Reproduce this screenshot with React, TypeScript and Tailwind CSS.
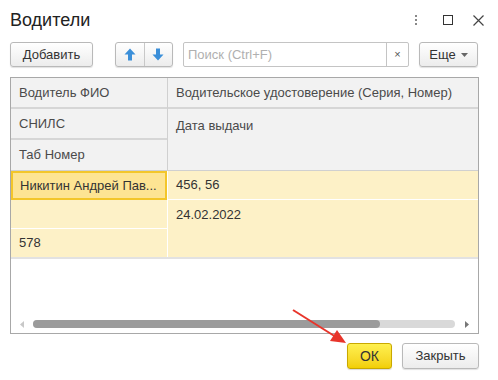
import React from "react";

const btn =
  "flex items-center justify-center rounded-[3px] border border-[#b9b9b9] bg-gradient-to-b from-white to-[#ececec] shadow-[0_1px_1px_rgba(0,0,0,0.12)] text-[13px] text-[#333]";

function ArrowUp() {
  return (
    <svg width="12" height="13" viewBox="0 0 12 13">
      <path d="M6 0.5 L11.5 6.5 L8 6.5 L8 12.5 L4 12.5 L4 6.5 L0.5 6.5 Z" fill="#3b8fd9" />
    </svg>
  );
}
function ArrowDown() {
  return (
    <svg width="12" height="13" viewBox="0 0 12 13">
      <path d="M6 12.5 L11.5 6.5 L8 6.5 L8 0.5 L4 0.5 L4 6.5 L0.5 6.5 Z" fill="#3b8fd9" />
    </svg>
  );
}

export default function App() {
  return (
    <div
      className="relative w-[498px] h-[380px] bg-white text-[#333] overflow-hidden"
      style={{ fontFamily: '"Liberation Sans", Arial, sans-serif' }}
    >
      {/* Title */}
      <div className="flex items-center h-[40px] pl-[10px] pr-[14px] pt-[0px]">
        <div className="text-[18px] text-[#222] leading-none">Водители</div>
        <div className="ml-auto flex items-center">
          <div className="flex flex-col gap-[2px] mr-[26px]">
            <div className="w-[2px] h-[2px] bg-[#888]" />
            <div className="w-[2px] h-[2px] bg-[#888]" />
            <div className="w-[2px] h-[2px] bg-[#888]" />
          </div>
          <div className="w-[10px] h-[10px] border border-[#333] mr-[20px]" />
          <svg width="11" height="11" viewBox="0 0 11 11">
            <path d="M0.5 0.5 L10.5 10.5 M10.5 0.5 L0.5 10.5" stroke="#444" strokeWidth="1.2" />
          </svg>
        </div>
      </div>

      {/* Toolbar */}
      <div className="flex items-center h-[25px] mt-[2px] pl-[10px]">
        <div className={`${btn} w-[83px] h-[25px]`}>Добавить</div>
        <div className="ml-[22px] flex h-[25px] w-[58px] rounded-[3px] border border-[#b9b9b9] bg-gradient-to-b from-white to-[#ececec] shadow-[0_1px_1px_rgba(0,0,0,0.12)]">
          <div className="flex-1 flex items-center justify-center border-r border-[#c8c8c8]">
            <ArrowUp />
          </div>
          <div className="flex-1 flex items-center justify-center">
            <ArrowDown />
          </div>
        </div>
        <div className="ml-[10px] flex h-[25px] w-[226px] border border-[#c4c4c4] rounded-[2px] bg-white">
          <div className="flex-1 flex items-center pl-[4px] text-[13px] text-[#b0b0b0]">Поиск (Ctrl+F)</div>
          <div className="w-[22px] flex items-center justify-center border-l border-[#c4c4c4] text-[11px] text-[#555]">×</div>
        </div>
        <div className={`${btn} ml-[10px] w-[59px] h-[25px] gap-[5px]`}>
          <span>Еще</span>
          <svg width="7" height="4" viewBox="0 0 7 4">
            <path d="M0 0 L7 0 L3.5 4 Z" fill="#666" />
          </svg>
        </div>
      </div>

      {/* Table */}
      <div className="ml-[10px] mt-[10px] w-[469px] h-[257px] border border-[#a8a8a8] flex flex-col">
        {/* header */}
        <div className="flex bg-[#f2f2f2] text-[13px] text-[#4a4a4a] border-b border-[#d0d0d0]">
          <div className="w-[157px] flex flex-col border-r border-[#d0d0d0]">
            <div className="h-[31px] flex items-center pl-[8px] border-b-2 border-[#d6d6d6]">Водитель ФИО</div>
            <div className="h-[31px] flex items-center pl-[8px] border-b-2 border-[#d6d6d6]">СНИЛС</div>
            <div className="h-[30px] flex items-center pl-[8px]">Таб Номер</div>
          </div>
          <div className="flex-1 flex flex-col">
            <div className="h-[31px] flex items-center pl-[8px] border-b-2 border-[#d6d6d6]">
              Водительское удостоверение (Серия, Номер)
            </div>
            <div className="h-[61px] pl-[8px] pt-[7px]">Дата выдачи</div>
          </div>
        </div>
        {/* data */}
        <div className="flex bg-[#fdf1c7] text-[13px] text-[#333] border-b-2 border-[#e2e2e2]">
          <div className="w-[157px] flex flex-col border-r border-white">
            <div className="h-[29px] flex items-center pl-[7px] border-2 border-[#f3c62a] bg-[#fde493] whitespace-nowrap">
              Никитин Андрей Пав...
            </div>
            <div className="h-[29px] border-b border-white" />
            <div className="h-[28px] flex items-center pl-[8px]">578</div>
          </div>
          <div className="flex-1 flex flex-col">
            <div className="h-[29px] flex items-center pl-[8px] border-b border-white">456, 56</div>
            <div className="h-[57px] pl-[8px] pt-[5px]">24.02.2022</div>
          </div>
        </div>
        <div className="flex-1" />
        {/* scrollbar */}
        <div className="h-[14px] flex items-center px-[9px] mb-[2px]">
          <svg width="4" height="7" viewBox="0 0 4 7">
            <path d="M4 0 L0 3.5 L4 7 Z" fill="#c8c8c8" />
          </svg>
          <div className="ml-[9px] w-[422px] h-[8px] rounded-full bg-[#d9d9d9] flex">
            <div className="w-[347px] h-[8px] rounded-full bg-[#9b9b9b]" />
          </div>
          <svg className="ml-auto" width="4" height="7" viewBox="0 0 4 7">
            <path d="M0 0 L4 3.5 L0 7 Z" fill="#777" />
          </svg>
        </div>
      </div>

      {/* Bottom buttons */}
      <div className="flex justify-end mt-[9px] pr-[19px] gap-[10px]">
        <div className="flex items-center justify-center w-[45px] h-[26px] rounded-[3px] border border-[#c9a800] bg-gradient-to-b from-[#fff04d] to-[#f2cf00] text-[14px] text-[#333] shadow-[0_1px_1px_rgba(0,0,0,0.15)]">
          ОК
        </div>
        <div className={`${btn} w-[77px] h-[26px]`}>Закрыть</div>
      </div>

      {/* Annotation arrow */}
      <svg className="absolute left-0 top-0 pointer-events-none" width="498" height="380">
        <line x1="293" y1="310" x2="336" y2="337" stroke="#e8352b" strokeWidth="2" />
        <path d="M346 343 L330 341 L337 330 Z" fill="#e8352b" />
      </svg>
    </div>
  );
}
